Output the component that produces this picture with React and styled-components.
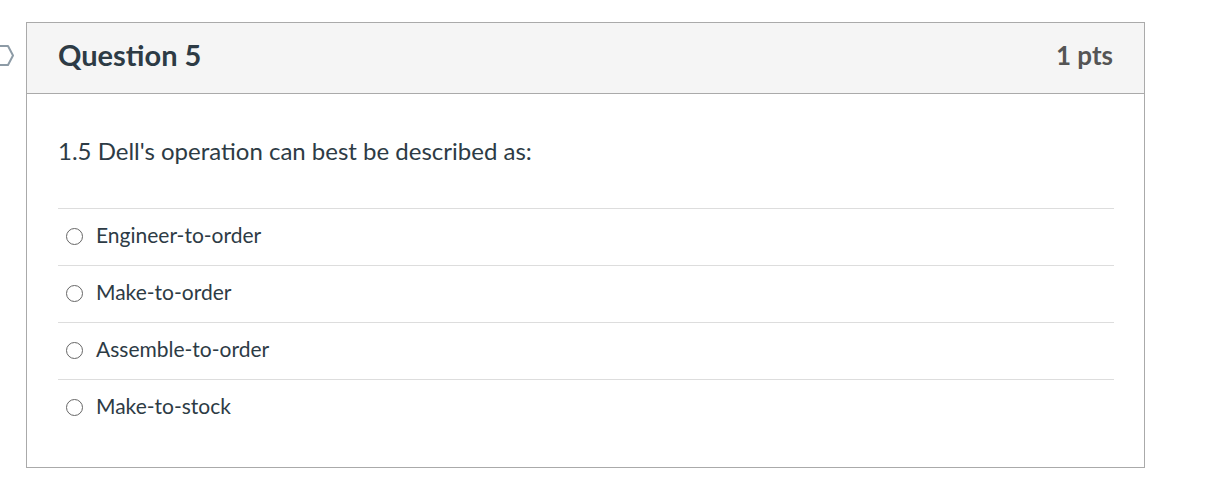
import React from 'react';
import styled, { createGlobalStyle } from 'styled-components';

const GlobalStyle = createGlobalStyle`
  body {
    margin: 0;
    background: #fff;
    font-family: Lato, "Open Sans", "Liberation Sans", sans-serif;
    color: #2d3b45;
  }
`;

const Page = styled.div`
  position: relative;
  padding: 22px 0 0 26px;
  width: 1218px;
  height: 479px;
  box-sizing: border-box;
`;

const Flag = styled.svg`
  position: absolute;
  left: 0;
  top: 44px;
`;

const Card = styled.div`
  width: 1119px;
  height: 446px;
  box-sizing: border-box;
  border: 1px solid #aaa;
`;

const Header = styled.div`
  height: 71px;
  box-sizing: border-box;
  background: #f5f5f5;
  border-bottom: 1px solid #aaa;
  display: flex;
  align-items: center;
  justify-content: space-between;
  padding: 0 31px 7px;
`;

const Title = styled.h2`
  margin: 0;
  font-size: 29px;
  font-weight: 700;
  color: #2d3b45;
`;

const Points = styled.span`
  font-size: 26px;
  font-weight: 700;
  color: #555;
`;

const Body = styled.div`
  padding: 40px 30px 0 31px;
`;

const Prompt = styled.p`
  margin: 0 0 40px;
  font-size: 24px;
  line-height: 34px;
`;

const Answer = styled.label`
  display: flex;
  align-items: center;
  gap: 13px;
  height: 57px;
  padding: 0 0 5px 8px;
  box-sizing: border-box;
  border-top: 1px solid #ddd;
  font-size: 21px;
  color: #2d3b45;
`;

const Radio = styled.span`
  width: 17px;
  height: 17px;
  margin-top: 3px;
  box-sizing: border-box;
  border: 1.5px solid #666;
  border-radius: 50%;
  flex: none;
`;

const answers = ['Engineer-to-order', 'Make-to-order', 'Assemble-to-order', 'Make-to-stock'];

export default function App() {
  return (
    <>
      <GlobalStyle />
      <Page>
        <Flag width="16" height="24" viewBox="0 0 16 24">
          <polygon points="-4,2 8,2 13,11.5 8,21 -4,21" fill="none" stroke="#8d9ba6" strokeWidth="2" strokeLinejoin="round" />
        </Flag>
        <Card>
          <Header>
            <Title>Question 5</Title>
            <Points>1 pts</Points>
          </Header>
          <Body>
            <Prompt>1.5 Dell's operation can best be described as:</Prompt>
            {answers.map((a) => (
              <Answer key={a}>
                <Radio />
                {a}
              </Answer>
            ))}
          </Body>
        </Card>
      </Page>
    </>
  );
}
